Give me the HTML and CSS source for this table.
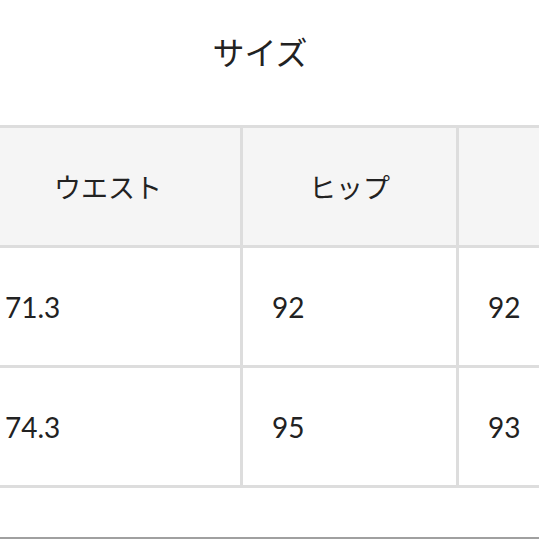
FILE: index.html
```html
<!DOCTYPE html>
<html lang="ja">
<head>
<meta charset="utf-8">
<link rel="stylesheet" href="styles.css">
</head>
<body>
<div class="page">
  <h2 class="title">サイズ</h2>
  <div class="table-wrap">
    <div class="grid">
      <div class="cell head">ウエスト</div>
      <div class="cell head">ヒップ</div>
      <div class="cell head"></div>
      <div class="cell">71.3</div>
      <div class="cell">92</div>
      <div class="cell">92</div>
      <div class="cell">74.3</div>
      <div class="cell">95</div>
      <div class="cell">93</div>
    </div>
  </div>
  <div class="bottom"></div>
</div>
</body>
</html>
```
FILE: styles.css
```css
html, body {
  margin: 0;
  padding: 0;
  background: #ffffff;
}
body {
  font-family: "Lato", "Noto Sans CJK JP", sans-serif;
  color: #222222;
}
.page {
  width: 539px;
  height: 539px;
  overflow: hidden;
}
.title {
  margin: 0;
  height: 125px;
  box-sizing: border-box;
  padding-top: 31px;
  padding-right: 19px;
  line-height: 40px;
  font-size: 32px;
  font-weight: 400;
  text-align: center;
  font-family: "Noto Sans CJK JP", sans-serif;
  color: #222222;
}
.table-wrap {
  width: 539px;
  overflow: hidden;
}
.grid {
  display: grid;
  grid-template-columns: 264px 213px 213px;
  grid-auto-rows: 117px;
  gap: 3px;
  padding: 3px;
  background: #dddddd;
  margin-left: -27px;
  width: max-content;
}
.cell {
  background: #ffffff;
  display: flex;
  align-items: center;
  padding-left: 29px;
  font-size: 28px;
  color: #222222;
}
.cell.head {
  background: #f5f5f5;
  justify-content: center;
  padding-left: 0;
  font-size: 27px;
  font-family: "Noto Sans CJK JP", sans-serif;
}
.bottom {
  height: 49px;
  border-bottom: 2px solid #a0a0a0;
}
```
